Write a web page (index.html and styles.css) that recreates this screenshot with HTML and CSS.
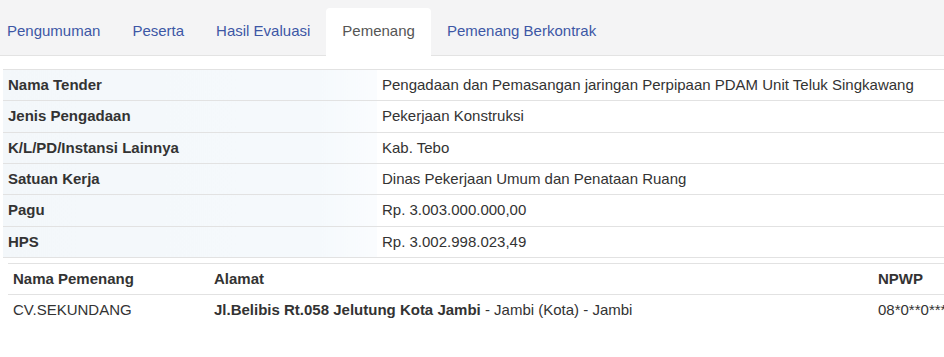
FILE: index.html
```html
<!DOCTYPE html>
<html lang="en">
<head>
  <meta charset="UTF-8" />
  <title>Pemenang Tender</title>
  <link rel="stylesheet" href="styles.css">
</head>
<body>
  <div class="page">
    <ul class="nav-tabs">
      <li><a href="#">Pengumuman</a></li>
      <li><a href="#">Peserta</a></li>
      <li><a href="#">Hasil Evaluasi</a></li>
      <li class="active"><a href="#">Pemenang</a></li>
      <li><a href="#">Pemenang Berkontrak</a></li>
    </ul>

    <div class="content">
      <table class="detail">
        <tr><th>Nama Tender</th><td>Pengadaan dan Pemasangan jaringan Perpipaan PDAM Unit Teluk Singkawang</td></tr>
        <tr><th>Jenis Pengadaan</th><td>Pekerjaan Konstruksi</td></tr>
        <tr><th>K/L/PD/Instansi Lainnya</th><td>Kab. Tebo</td></tr>
        <tr><th>Satuan Kerja</th><td>Dinas Pekerjaan Umum dan Penataan Ruang</td></tr>
        <tr><th>Pagu</th><td>Rp. 3.003.000.000,00</td></tr>
        <tr><th>HPS</th><td>Rp. 3.002.998.023,49</td></tr>
      </table>

      <table class="winners">
        <thead>
          <tr>
            <th class="col-name">Nama Pemenang</th>
            <th class="col-address">Alamat</th>
            <th>NPWP</th>
          </tr>
        </thead>
        <tbody>
          <tr>
            <td>CV.SEKUNDANG</td>
            <td><strong>Jl.Belibis Rt.058 Jelutung Kota Jambi</strong> - Jambi (Kota) - Jambi</td>
            <td>08*0**0***.*-***.**0</td>
          </tr>
        </tbody>
      </table>
    </div>
  </div>
</body>
</html>
```

FILE: styles.css
```css
* {
  box-sizing: border-box;
}

html, body {
  margin: 0;
  padding: 0;
  overflow: hidden;
}

body {
  font-family: 'Liberation Sans', Arial, sans-serif;
  font-size: 15px;
  line-height: 20px;
  color: #333;
  background: #fff;
}

.page {
  width: 1040px;
}

.nav-tabs {
  list-style: none;
  margin: 0;
  padding: 8px 0 0 0;
  display: flex;
  background-color: #f4f4f5;
  border-bottom: 1px solid #e3e3e3;
  height: 56px;
}

.nav-tabs li {
  margin-bottom: -1px;
}

.nav-tabs li:first-child {
  margin-left: -9px;
}

.nav-tabs a {
  display: block;
  padding: 13px 16px 14px;
  color: #3d57a5;
  text-decoration: none;
  border-radius: 4px 4px 0 0;
  height: 48px;
}

.nav-tabs .active a {
  background-color: #fff;
  color: #555;
}

.content {
  padding: 13px 0 0 3px;
}

table {
  border-collapse: collapse;
  border-spacing: 0;
  width: 100%;
}

.detail th,
.detail td {
  padding: 5px 5px;
  line-height: 20.33px;
  text-align: left;
  vertical-align: top;
  border-top: 1px solid #e2e2e2;
}

.detail tr:last-child th,
.detail tr:last-child td {
  border-bottom: 1px solid #e2e2e2;
}

.detail th {
  width: 374px;
  font-weight: bold;
  background: linear-gradient(to right, #f3f7fa, #f5f9fc 85%, #fafcfe);
}

.detail td {
  font-weight: normal;
}

.winners {
  margin: 5px 0 0 5px;
  width: calc(100% - 5px);
}

.winners th,
.winners td {
  padding: 5px 5px;
  line-height: 20px;
  text-align: left;
  vertical-align: top;
}

.winners thead th {
  border-top: 1px solid #e2e2e2;
  border-bottom: 1px solid #e2e2e2;
  font-weight: bold;
}

.winners .col-name {
  width: 201px;
}

.winners .col-address {
  width: 664px;
}
```
